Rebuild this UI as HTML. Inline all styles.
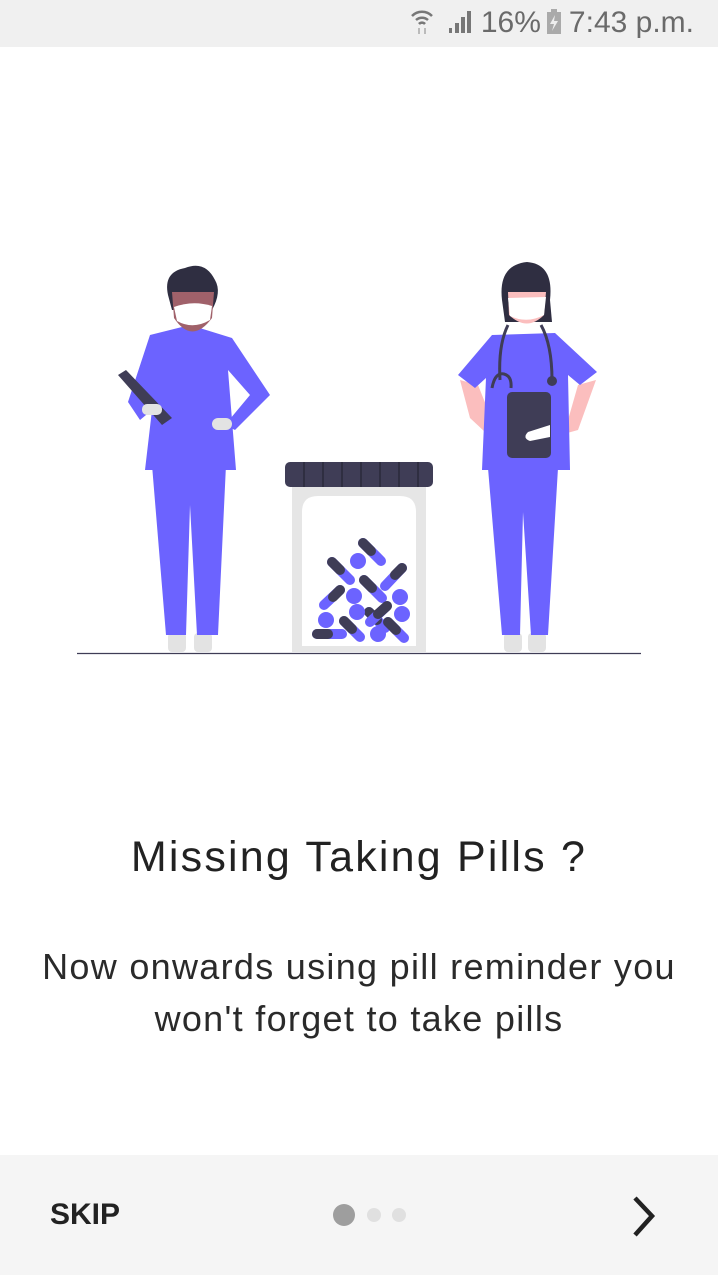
<!DOCTYPE html>
<html><head><meta charset="utf-8"><style>
html,body{margin:0;padding:0;width:718px;height:1275px;background:#fff;overflow:hidden;font-family:"Liberation Sans",sans-serif}
.sb{position:absolute;left:0;top:0;width:718px;height:47px;background:#f0f0f0}
.sbt{position:absolute;right:24px;top:6px;font-size:30px;color:#6a6a6a;letter-spacing:0}
h1{position:absolute;top:833px;left:0;width:718px;margin:0;text-align:center;font-weight:normal;font-size:43px;color:#222;letter-spacing:2.2px}
.p{position:absolute;top:941px;left:0;width:718px;text-align:center;font-size:36px;line-height:52px;color:#2a2a2a;font-weight:300;letter-spacing:1.3px}
.bb{position:absolute;left:0;top:1155px;width:718px;height:120px;background:#f5f5f5}
.skip{position:absolute;left:50px;top:1198px;font-size:30px;font-weight:bold;color:#222}
</style></head><body>
<div class="sb"><span class="sbt">
<svg width="24" height="26" viewBox="0 0 24 26" style="vertical-align:-2px"><path d="M2 8 A14 14 0 0 1 22 8" stroke="#777" stroke-width="2.5" fill="none"/><path d="M6 12 A9 9 0 0 1 18 12" stroke="#777" stroke-width="2.5" fill="none"/><path d="M9 16 A4 4 0 0 1 15 16" stroke="#777" stroke-width="2.5" fill="none"/><path d="M9 20v6M15 20v6" stroke="#bbb" stroke-width="2"/></svg>
<svg width="26" height="24" viewBox="0 0 26 24" style="vertical-align:-2px;margin-left:4px"><rect x="2" y="18" width="3" height="5" fill="#777"/><rect x="8" y="13" width="4" height="10" fill="#777"/><rect x="14" y="7" width="4" height="16" fill="#777"/><rect x="20" y="1" width="4" height="22" fill="#777"/></svg> 16%<svg width="18" height="26" viewBox="0 0 18 26" style="vertical-align:-3px;margin:0 6px 0 4px"><rect x="2" y="3" width="14" height="22" fill="#aaa"/><rect x="6" y="0" width="6" height="3" fill="#aaa"/><path d="M10 6 L5 15 H9 L7 22 L13 12 H9 Z" fill="#eee"/></svg>7:43 p.m.</span></div>

<svg style="position:absolute;left:0;top:0" width="718" height="700" viewBox="0 0 718 700">
<rect x="168" y="633" width="18" height="19" rx="4" fill="#e3e3e3"/>
<rect x="194" y="633" width="18" height="19" rx="4" fill="#e3e3e3"/>
<path d="M152 465 L226 465 L218 635 L197 635 L190 505 L186 635 L166 635 Z" fill="#6c63ff"/>
<path d="M150 335 L190 325 L232 338 L270 395 L235 430 L225 425 L250 395 L228 370 L236 470 L145 470 L152 410 L140 420 L128 402 Z" fill="#6c63ff"/>
<rect x="212" y="418" width="20" height="12" rx="6" fill="#e3e3e3"/>
<path d="M118 375 L126 370 L172 418 L162 425 Z" fill="#3f3d56"/>
<rect x="142" y="404" width="20" height="11" rx="5" fill="#e3e3e3"/>
<path d="M168 295 Q163 272 185 268 Q205 260 215 280 Q222 292 212 310 L172 310 Z" fill="#2f2e41"/>
<path d="M172 292 L214 292 L212 318 Q192 345 174 318 Z" fill="#a0616a"/>
<path d="M174 307 Q193 300 212 306 L210 320 Q193 330 177 321 Z" fill="#fff"/>
<rect x="504" y="633" width="18" height="19" rx="4" fill="#e3e3e3"/>
<rect x="528" y="633" width="18" height="19" rx="4" fill="#e3e3e3"/>
<path d="M488 468 L558 468 L548 635 L531 635 L523 512 L520 635 L502 635 Z" fill="#6c63ff"/>
<path d="M460 380 L478 385 L492 420 L510 428 L505 440 L485 432 L470 418 Z" fill="#fbbebe"/>
<path d="M596 380 L578 385 L568 420 L535 428 L535 442 L578 430 Z" fill="#fbbebe"/>
<path d="M458 375 L492 335 L555 333 L597 372 L580 385 L568 375 L570 470 L482 470 L486 378 L475 388 Z" fill="#6c63ff"/>
<rect x="507" y="392" width="44" height="66" rx="5" fill="#3f3d56"/>
<path d="M528 432 L550 425 L550 437 L530 441 Q522 438 528 432Z" fill="#fff"/>
<path d="M508 325 Q498 345 500 380 M541 325 Q552 345 552 380" stroke="#3f3d56" stroke-width="3" fill="none"/>
<path d="M492 388 Q495 372 504 374 Q512 376 511 388" stroke="#3f3d56" stroke-width="3" fill="none"/>
<circle cx="552" cy="381" r="5" fill="#3f3d56"/>
<path d="M502 300 Q498 265 527 262 Q554 264 550 300 L552 322 L505 322 Z" fill="#2f2e41"/>
<path d="M508 292 L546 292 L544 315 Q527 332 509 315 Z" fill="#fbbebe"/>
<path d="M508 298 L546 297 L544 315 Q527 324 510 316 Z" fill="#fff"/>
<rect x="292" y="485" width="134" height="167" fill="#e6e6e6"/>
<path d="M302 646 L302 512 Q302 496 318 496 L400 496 Q416 496 416 512 L416 646 Z" fill="#fff"/>
<rect x="285" y="462" width="148" height="25" rx="5" fill="#3f3d56"/>
<g stroke="#2f2e41" stroke-width="2"><path d="M304 462v25M323 462v25M342 462v25M361 462v25M380 462v25M399 462v25M418 462v25"/></g>
<g stroke-linecap="round" stroke-width="10">
<path d="M363 543 L381 561" stroke="#6c63ff"/><path d="M363 543 L371 551" stroke="#3f3d56"/>
<path d="M332 562 L350 580" stroke="#6c63ff"/><path d="M332 562 L340 570" stroke="#3f3d56"/>
<path d="M385 586 L402 568" stroke="#6c63ff"/><path d="M395 575 L402 568" stroke="#3f3d56"/>
<path d="M364 580 L382 598" stroke="#6c63ff"/><path d="M364 580 L372 588" stroke="#3f3d56"/>
<path d="M324 605 L340 590" stroke="#6c63ff"/><path d="M333 597 L340 590" stroke="#3f3d56"/>
<path d="M369 612 L385 628" stroke="#6c63ff"/><path d="M369 612 L377 620" stroke="#3f3d56"/>
<path d="M370 622 L387 606" stroke="#6c63ff"/><path d="M378 614 L387 606" stroke="#3f3d56"/>
<path d="M344 621 L360 637" stroke="#6c63ff"/><path d="M344 621 L352 629" stroke="#3f3d56"/>
<path d="M317 634 L342 634" stroke="#6c63ff"/><path d="M317 634 L328 634" stroke="#3f3d56"/>
<path d="M388 622 L404 638" stroke="#6c63ff"/><path d="M388 622 L396 630" stroke="#3f3d56"/>
</g>
<g fill="#6c63ff"><circle cx="358" cy="561" r="8"/><circle cx="354" cy="596" r="8"/><circle cx="357" cy="612" r="8"/><circle cx="326" cy="620" r="8"/><circle cx="400" cy="597" r="8"/><circle cx="402" cy="614" r="8"/><circle cx="378" cy="634" r="8"/></g>
<line x1="77" y1="653.5" x2="641" y2="653.5" stroke="#3f3d56" stroke-width="1.3"/>
</svg>

<h1>Missing Taking Pills ?</h1>
<div class="p">Now onwards using pill reminder you<br>won't forget to take pills</div>

<div class="bb"></div>
<div class="skip">SKIP</div>
<svg style="position:absolute;left:0;top:1155px" width="718" height="120">
<circle cx="344" cy="60" r="11" fill="#9e9e9e"/>
<circle cx="374" cy="60" r="7" fill="#e0e0e0"/>
<circle cx="399" cy="60" r="7" fill="#e0e0e0"/>
<path d="M635 43 L652 61 L635 80" stroke="#222" stroke-width="4.5" fill="none"/>
</svg>
</body></html>
